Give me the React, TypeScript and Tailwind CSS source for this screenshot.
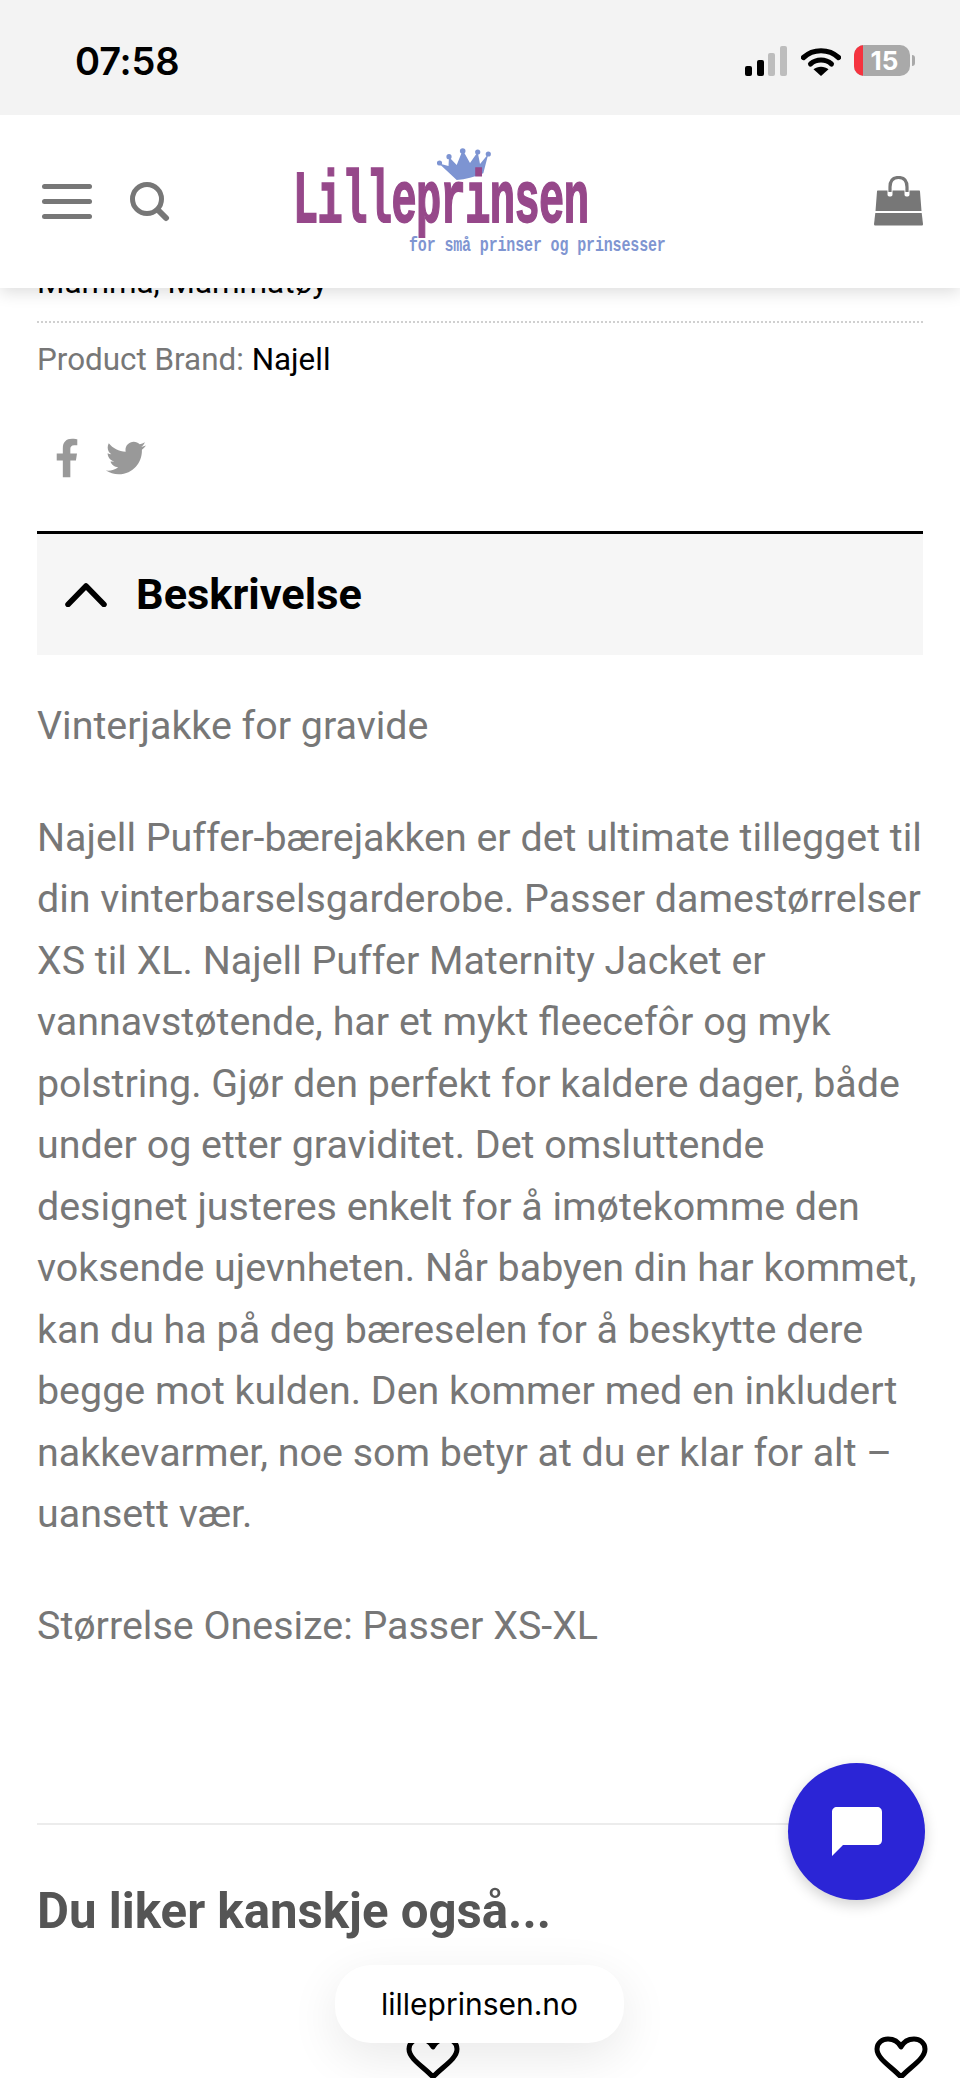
import { FaFacebookF, FaTwitter } from "react-icons/fa";

function Signal() {
  return (
    <svg width="42" height="30" viewBox="0 0 42 30" className="block">
      <rect x="0" y="20" width="7" height="10" rx="2" fill="#000" />
      <rect x="12" y="14" width="7" height="16" rx="2" fill="#000" />
      <rect x="23" y="7" width="7" height="23" rx="2" fill="#bdbdbd" />
      <rect x="35" y="0" width="7" height="30" rx="2" fill="#bdbdbd" />
    </svg>
  );
}

function Wifi() {
  return (
    <svg width="40" height="30" viewBox="0 0 40 30" className="block">
      <path d="M2.5 11.5C12 2.5 28 2.5 37.5 11.5" fill="none" stroke="#000" strokeWidth="5.2" strokeLinecap="round" />
      <path d="M9.5 18C15.5 12.8 24.5 12.8 30.5 18" fill="none" stroke="#000" strokeWidth="5" strokeLinecap="round" />
      <path d="M20 30L12.5 23.2C16.5 19.8 23.5 19.8 27.5 23.2Z" fill="#000" />
    </svg>
  );
}

function Battery() {
  return (
    <div className="flex items-center">
      <div className="relative flex h-[31px] w-[56px] items-center justify-center overflow-hidden rounded-[10px] bg-[#a9a9a9]">
        <div className="absolute inset-y-0 left-0 w-[9px] bg-[#f5333f]" />
        <span className="relative pl-[5px] font-['Inter',sans-serif] text-[26px] leading-none font-bold text-white">15</span>
      </div>
      <div className="ml-[2px] h-[11px] w-[3px] rounded-r-full bg-[#a9a9a9]" />
    </div>
  );
}

function Logo() {
  return (
    <div className="relative h-[112px] w-[380px] shrink-0">
      <svg width="58" height="36" viewBox="0 0 58 36" className="absolute left-[138px] top-[5px]">
        <path d="M2 15.500L19.700 32Q33 31 46.300 25.300L51.300 6L43 16L40.700 4L33 15L25.700 2L19.700 17L12 9L11.500 18Z" fill="#7d94d2" />
        <g fill="#7d94d2">
          <circle cx="2.500" cy="15" r="2.600" />
          <circle cx="12" cy="8.700" r="2.600" />
          <circle cx="25.700" cy="3" r="2.800" />
          <circle cx="40.700" cy="4" r="2.600" />
          <circle cx="51.300" cy="6" r="2.600" />
        </g>
      </svg>
      <div className="absolute left-[-6px] top-[44px] origin-left scale-y-[1.75] font-['Liberation_Mono',monospace] text-[42px] leading-[33px] font-bold tracking-[-0.6px] whitespace-nowrap text-[#96488a] [-webkit-text-stroke:1px_#96488a]">
        Lilleprinsen
      </div>
      <div className="absolute left-[110px] top-[96px] font-['Liberation_Mono',monospace] text-[15px] leading-[15px] font-bold tracking-[-0.15px] whitespace-nowrap text-[#7f95d1]">
        <span className="inline-block origin-left scale-y-[1.3]">for små prinser og prinsesser</span>
      </div>
    </div>
  );
}

function Heart() {
  return (
    <svg width="54" height="44" viewBox="0 0 54 44" className="block">
      <path
        d="M27 41C18 31 3 23 3 13C3 6.500 8.500 3 14 3C20 3 24.500 6 27 11C29.500 6 34 3 40 3C45.500 3 51 6.500 51 13C51 23 36 31 27 41Z"
        fill="none"
        stroke="#000"
        strokeWidth="5"
        strokeLinejoin="round"
      />
    </svg>
  );
}

export default function App() {
  return (
    <div className="relative h-[2078px] w-[960px] overflow-hidden bg-white font-['Roboto',sans-serif]">
      <div className="relative z-20 flex h-[115px] items-start justify-between bg-[#f3f3f3] pt-[42px] pr-[45px] pl-[75px]">
        <span className="font-['Inter',sans-serif] text-[38px] leading-[38px] font-semibold tracking-[-0.2px] text-black">07:58</span>
        <div className="flex items-center pt-[3px]">
          <Signal />
          <div className="ml-[14px]"><Wifi /></div>
          <div className="ml-[13px]"><Battery /></div>
        </div>
      </div>

      <header className="relative z-10 flex h-[173px] items-center bg-white pr-[37px] pl-[42px] shadow-[0_4px_16px_rgba(0,0,0,0.14)]">
        <div className="flex w-[50px] flex-col gap-[10px]">
          <div className="h-[5px] rounded-full bg-[#777]" />
          <div className="h-[5px] rounded-full bg-[#777]" />
          <div className="h-[5px] rounded-full bg-[#777]" />
        </div>
        <svg width="40" height="40" viewBox="0 0 40 40" className="ml-[38px] shrink-0">
          <circle cx="17" cy="17" r="14.500" fill="none" stroke="#777" strokeWidth="5" />
          <path d="M28 28L36 36" stroke="#777" strokeWidth="6" strokeLinecap="round" />
        </svg>
        <div className="ml-[129px] -translate-y-[3px]"><Logo /></div>
        <svg width="49" height="50" viewBox="0 0 49 50" className="ml-auto shrink-0 -translate-y-[1px]">
          <path d="M16 16V11C16 5 19 1.500 24.500 1.500C30 1.500 33 5 33 11V16" fill="none" stroke="#777" strokeWidth="3.200" />
          <path d="M4 14.500H13.500V18.500C13.500 20 14.500 20.500 16 20.500C17.500 20.500 18.500 20 18.500 18.500V14.500H30.500V18.500C30.500 20 31.500 20.500 33 20.500C34.500 20.500 35.500 20 35.500 18.500V14.500H45C45.700 14.500 46 15 46 15.500L47.500 35H1.500L3 15.500C3 15 3.300 14.500 4 14.500Z" fill="#777" />
          <path d="M1.300 37H47.700L49 48C49 49 48.500 49.500 47.500 49.500H1.500C.5 49.500 0 49 0 48Z" fill="#777" />
        </svg>
      </header>

      <main className="px-[37px]">
        <div className="-mt-[25px] text-[31.400px] leading-[40px] text-black">Mamma, Mammatøy</div>
        <div className="mt-[18px] border-t-2 border-dotted border-[#d0d0d0]" />
        <div className="mt-[17px] text-[31.400px] leading-[40px] text-[#777]">
          Product Brand: <span className="text-black">Najell</span>
        </div>
        <div className="mt-[58px] flex items-center pl-[18px] text-[#999]">
          <FaFacebookF className="h-[40px] w-[24px]" />
          <FaTwitter className="ml-[27px] h-[40px] w-[40px]" />
        </div>
        <div className="mt-[53px] flex h-[124px] items-center border-t-[3px] border-black bg-[#f6f6f6] pl-[28px]">
          <svg width="42" height="25" viewBox="0 0 42 25" className="shrink-0">
            <path d="M3 22.500L21 4L39 22.500" fill="none" stroke="#000" strokeWidth="5.500" strokeLinecap="round" strokeLinejoin="round" />
          </svg>
          <span className="ml-[29px] text-[43.300px] leading-none font-bold text-black">Beskrivelse</span>
        </div>
        <div className="mt-[40px] text-[39.400px] leading-[61.500px] text-[#777]">
          <p>Vinterjakke for gravide</p>
          <p className="mt-[50px]">
            Najell Puffer-bærejakken er det ultimate tillegget til din vinterbarselsgarderobe. Passer damestørrelser XS til XL. Najell Puffer Maternity Jacket er vannavstøtende, har et mykt fleecefôr og myk polstring. Gjør den perfekt for kaldere dager, både under og etter graviditet. Det omsluttende designet justeres enkelt for å imøtekomme den voksende ujevnheten. Når babyen din har kommet, kan du ha på deg bæreselen for å beskytte dere begge mot kulden. Den kommer med en inkludert nakkevarmer, noe som betyr at du er klar for alt – uansett vær.
          </p>
          <p className="mt-[50px]">Størrelse Onesize: Passer XS-XL</p>
        </div>
        <div className="mt-[167px] border-t-2 border-[#ececec]" />
        <h2 className="mt-[58px] text-[49.200px] leading-[56px] font-bold text-[#555]">Du liker kanskje også...</h2>
        <div className="mt-[97px] grid grid-cols-2">
          <div className="flex justify-end"><div className="-translate-x-[20px]"><Heart /></div></div>
          <div className="flex justify-end"><div className="translate-x-[5px]"><Heart /></div></div>
        </div>
      </main>

      <button className="absolute top-[1763px] left-[788px] z-20 flex h-[137px] w-[137px] items-center justify-center rounded-full bg-[#2b25d6] shadow-[0_5px_14px_rgba(0,0,0,0.18)]">
        <svg width="50" height="50" viewBox="0 0 50 50">
          <path d="M5 0H45C48 0 50 2 50 5V33C50 36 48 38 45 38H11L0 49V5C0 2 2 0 5 0Z" fill="#fff" />
        </svg>
      </button>

      <div className="absolute top-[1965px] left-[335px] z-20 flex h-[78px] w-[289px] items-center justify-center rounded-[36px] bg-white font-['Inter',sans-serif] text-[30px] text-black shadow-[0_14px_50px_rgba(0,0,0,0.09)]">
        lilleprinsen.no
      </div>
    </div>
  );
}
